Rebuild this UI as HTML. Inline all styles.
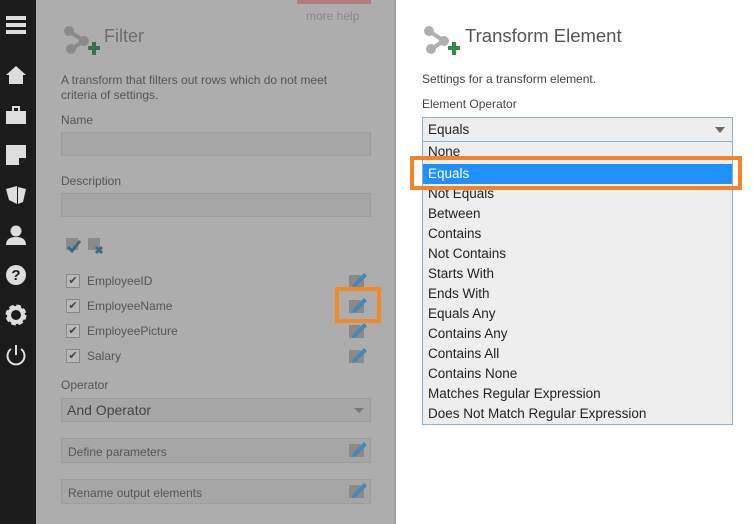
<!DOCTYPE html>
<html><head><style>
*{margin:0;padding:0;box-sizing:border-box}
body{width:753px;height:524px;overflow:hidden;font-family:"Segoe UI","Liberation Sans",sans-serif;background:#fff;position:relative}
.a{position:absolute}
.side{left:0;top:0;width:36px;height:524px;background:#1b1b1b}
.left{left:36px;top:0;width:360px;height:524px;background:#adadad;border-right:2px solid #a0a0a0}
.t{color:#555;font-size:12px}
.inp{background:#a6a6a6;border:1px solid #9c9c9c}
.lst div{height:20px;line-height:20px;padding-left:5px;font-size:13.5px;color:#222}
</style></head><body>
<div class="a side">
 <div class="a" style="left:6px;top:16px;width:20px;height:4px;background:#ddd;box-shadow:0 7px 0 #ddd,0 14px 0 #ddd"></div>
 <svg class="a" style="left:5px;top:64px" width="22" height="22"><path d="M11 2 L21 11 H18 V20 H4 V11 H1Z" fill="#ddd"/></svg>
 <svg class="a" style="left:5px;top:104px" width="22" height="22"><rect x="1" y="7" width="20" height="13" fill="#ddd"/><rect x="7" y="2" width="8" height="2" fill="#ddd"/><rect x="7" y="2" width="2" height="5" fill="#ddd"/><rect x="13" y="2" width="2" height="5" fill="#ddd"/></svg>
 <svg class="a" style="left:5px;top:144px" width="22" height="22"><path d="M1 1H21V14L14 21H1Z" fill="#ddd"/><path d="M21 14H14V21" fill="#1b1b1b"/></svg>
 <svg class="a" style="left:5px;top:184px" width="22" height="22"><path d="M1 5L12 2V20L4 16Z M13 3L21 5L18 18L13 20Z" fill="#ddd"/></svg>
 <svg class="a" style="left:5px;top:224px" width="22" height="22"><circle cx="11" cy="7" r="5.5" fill="#ddd"/><path d="M1 21Q1 13 11 13Q21 13 21 21Z" fill="#ddd"/></svg>
 <svg class="a" style="left:5px;top:264px" width="22" height="22"><circle cx="11" cy="11" r="10" fill="#ddd"/><text x="11" y="16" font-size="15" font-weight="bold" text-anchor="middle" fill="#1b1b1b" font-family="Liberation Sans">?</text></svg>
 <svg class="a" style="left:4px;top:303px" width="24" height="24"><circle cx="12" cy="12" r="8" fill="none" stroke="#ddd" stroke-width="5" stroke-dasharray="4 2.3"/><circle cx="12" cy="12" r="7" fill="none" stroke="#ddd" stroke-width="4"/></svg>
 <svg class="a" style="left:5px;top:344px" width="22" height="22"><path d="M6 5A8.5 8.5 0 1 0 16 5" fill="none" stroke="#ddd" stroke-width="2"/><path d="M11 1V11" stroke="#ddd" stroke-width="2"/></svg>
</div>
<div class="a left">
 <div class="a" style="left:261px;top:0;width:74px;height:4px;background:#b07e80"></div>
 <div class="a" style="left:270px;top:9px;font-size:12px;color:#888">more help</div>
 <svg class="a" style="left:26px;top:24px" width="40" height="32"><path d="M7 7L22 17L9 25" stroke="#8a8a8a" stroke-width="4" fill="none"/><circle cx="7" cy="7" r="5" fill="#8a8a8a"/><circle cx="22" cy="17" r="5" fill="#8a8a8a"/><circle cx="9" cy="25" r="5" fill="#8a8a8a"/><path d="M26 24H38M32 18V31" stroke="#3d6e4e" stroke-width="4"/></svg>
 <div class="a" style="left:68px;top:26px;font-size:18px;color:#6d6d6d">Filter</div>
 <div class="a t" style="left:25px;top:73px;line-height:15px">A transform that filters out rows which do not meet<br>criteria of settings.</div>
 <div class="a t" style="left:25px;top:113px">Name</div>
 <div class="a inp" style="left:25px;top:132px;width:310px;height:24px"></div>
 <div class="a t" style="left:25px;top:174px">Description</div>
 <div class="a inp" style="left:25px;top:193px;width:310px;height:24px"></div>
 <svg class="a" style="left:28px;top:236px" width="44" height="20"><rect x="2" y="2" width="12" height="12" fill="#8a8a8a"/><path d="M4 11l4 4l8-10" stroke="#3e6a86" stroke-width="3" fill="none"/><rect x="24" y="2" width="12" height="12" fill="#8a8a8a"/><path d="M32 11l6 6M38 11l-6 6" stroke="#3e6a86" stroke-width="3"/></svg>
 <div class="a" style="left:25px;top:272px;width:320px">
  <div style="height:25px;position:relative"><div class="a" style="left:5px;top:2px;width:14px;height:14px;background:#b8b8b8;border:1px solid #888;font-size:11px;line-height:12px;text-align:center;color:#444">✔</div><span class="a t" style="left:26px;top:2px">EmployeeID</span></div>
  <div style="height:25px;position:relative"><div class="a" style="left:5px;top:2px;width:14px;height:14px;background:#b8b8b8;border:1px solid #888;font-size:11px;line-height:12px;text-align:center;color:#444">✔</div><span class="a t" style="left:26px;top:2px">EmployeeName</span></div>
  <div style="height:25px;position:relative"><div class="a" style="left:5px;top:2px;width:14px;height:14px;background:#b8b8b8;border:1px solid #888;font-size:11px;line-height:12px;text-align:center;color:#444">✔</div><span class="a t" style="left:26px;top:2px">EmployeePicture</span></div>
  <div style="height:25px;position:relative"><div class="a" style="left:5px;top:2px;width:14px;height:14px;background:#b8b8b8;border:1px solid #888;font-size:11px;line-height:12px;text-align:center;color:#444">✔</div><span class="a t" style="left:26px;top:2px">Salary</span></div>
 </div>
 <svg class="a" style="left:312px;top:271px" width="22" height="95"><g id="p"><path d="M1 4H12L16 8V17H1Z" fill="#8a8a8a"/><path d="M5 13L16 2L19 5L8 16L4 17Z" fill="#4a86b4"/></g><use href="#p" y="25"/><use href="#p" y="50"/><use href="#p" y="75"/></svg>
 <div class="a" style="left:299px;top:287px;width:46px;height:36px;border:4px solid #f08a2a"></div>
 <div class="a t" style="left:25px;top:378px">Operator</div>
 <div class="a inp" style="left:25px;top:398px;width:310px;height:24px;font-size:14px;color:#444;padding:3px 5px">And Operator<span class="a" style="right:6px;top:9px;border:5px solid transparent;border-top:5px solid #777"></span></div>
 <div class="a inp" style="left:25px;top:438px;width:310px;height:25px;font-size:12px;color:#555;padding:6px 6px">Define parameters</div>
 <div class="a inp" style="left:25px;top:479px;width:310px;height:25px;font-size:12px;color:#555;padding:6px 6px">Rename output elements</div>
 <svg class="a" style="left:312px;top:440px" width="22" height="60"><use href="#p"/><use href="#p" y="41"/></svg>
</div>
<svg class="a" style="left:422px;top:24px" width="40" height="32"><path d="M7 7L22 17L9 25" stroke="#b0b0b0" stroke-width="4" fill="none"/><circle cx="7" cy="7" r="5" fill="#b0b0b0"/><circle cx="22" cy="17" r="5" fill="#b0b0b0"/><circle cx="9" cy="25" r="5" fill="#b0b0b0"/><path d="M26 24H38M32 18V31" stroke="#2e8b4f" stroke-width="4"/></svg>
<div class="a" style="left:465px;top:25px;font-size:18.5px;color:#555">Transform Element</div>
<div class="a" style="left:422px;top:72px;font-size:12px;color:#444">Settings for a transform element.</div>
<div class="a" style="left:422px;top:97px;font-size:12px;color:#444">Element Operator</div>
<div class="a" style="left:422px;top:117px;width:311px;height:25px;background:#eee;border:1px solid #8fb0d6;font-size:13.5px;color:#222;padding:4px 5px">Equals<span class="a" style="right:7px;top:9px;border:5px solid transparent;border-top:6px solid #666"></span></div>
<div class="a lst" style="left:422px;top:142px;width:311px;height:283px;background:#eee;border:1px solid #8fb0d6;border-top:none;overflow:hidden">
 <div style="height:22px;line-height:20px">None</div>
 <div style="background:#1e90ff;color:#fff">Equals</div>
 <div>Not Equals</div><div>Between</div><div>Contains</div><div>Not Contains</div><div>Starts With</div><div>Ends With</div><div>Equals Any</div><div>Contains Any</div><div>Contains All</div><div>Contains None</div><div>Matches Regular Expression</div><div>Does Not Match Regular Expression</div>
</div>
<div class="a" style="left:410px;top:156px;width:332px;height:34px;border:4px solid #f5832a"></div>
</body></html>
